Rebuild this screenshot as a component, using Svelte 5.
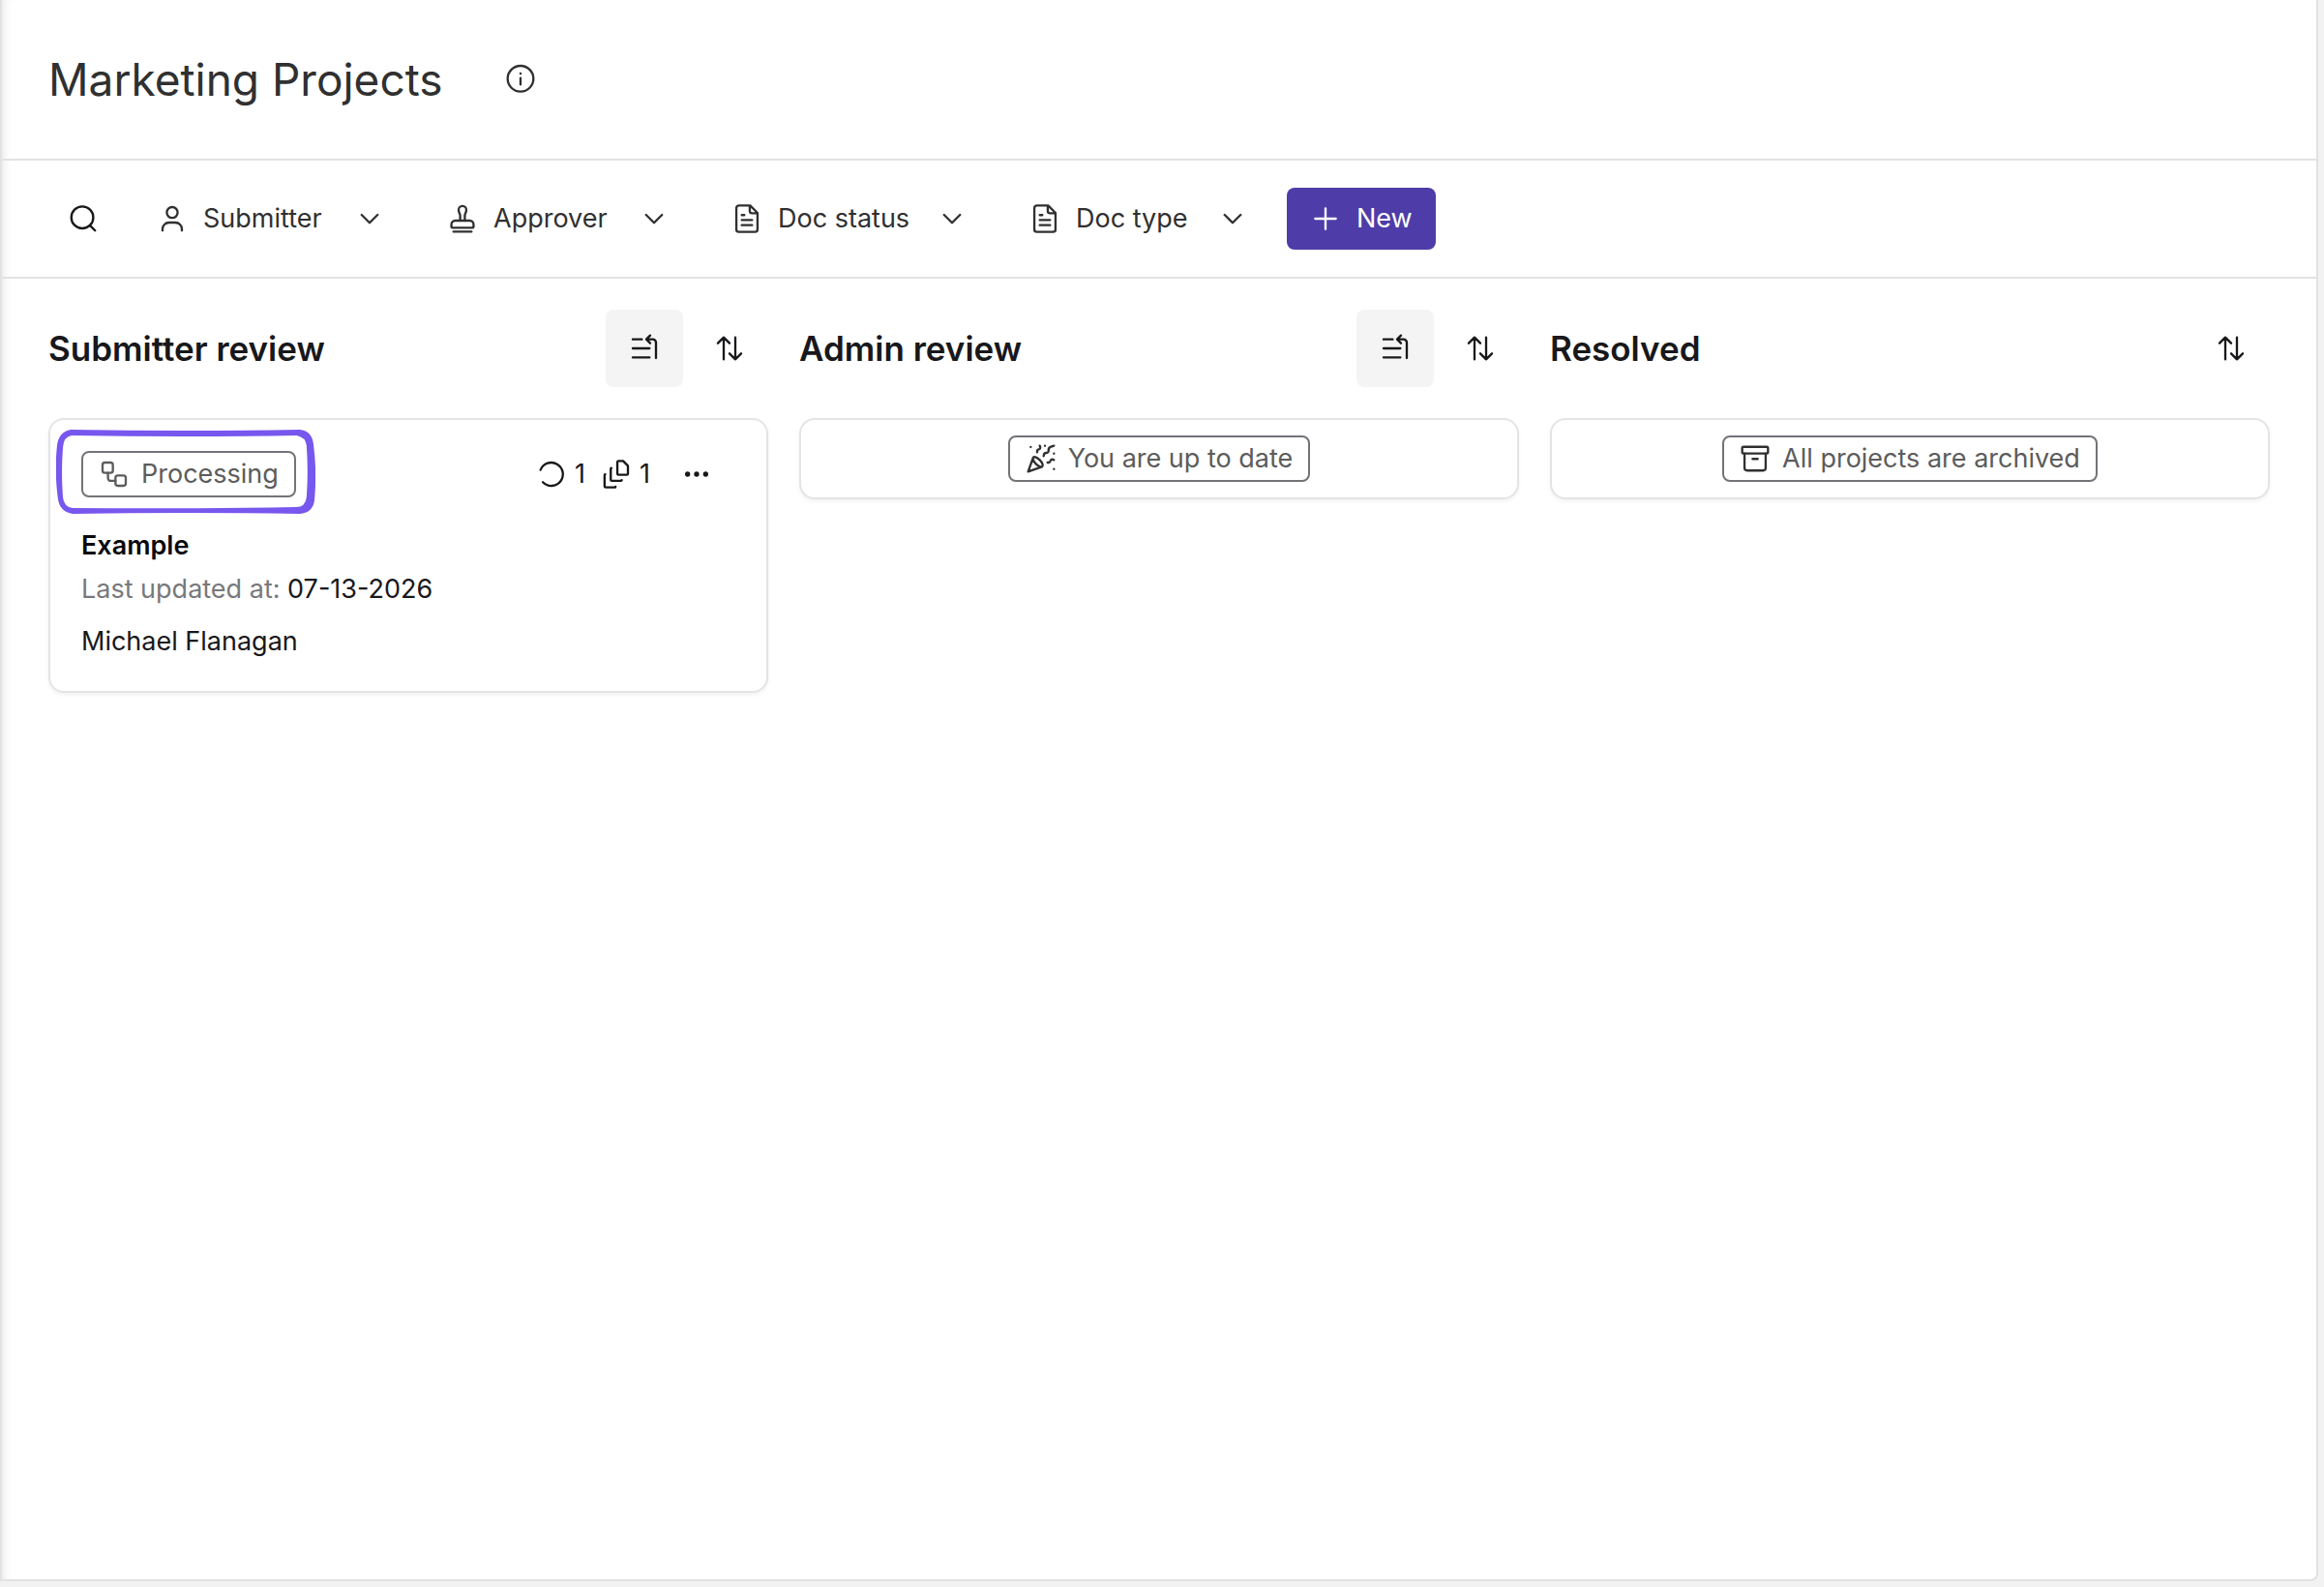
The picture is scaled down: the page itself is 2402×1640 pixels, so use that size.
<script lang="ts">
    type Filter = { label: string; icon: string; width: string };

    const filters: Filter[] = [
        { label: "Submitter", icon: "user", width: "submitter" },
        { label: "Approver", icon: "stamp", width: "approver" },
        { label: "Doc status", icon: "doc", width: "status" },
        { label: "Doc type", icon: "doc", width: "type" },
    ];
</script>

{#snippet icon(name: string)}
    <svg
        class="icon"
        width="32"
        height="32"
        viewBox="0 0 24 24"
        fill="none"
        stroke="currentColor"
        stroke-width="1.75"
        stroke-linecap="round"
        stroke-linejoin="round"
        aria-hidden="true"
    >
        {#if name === "info"}
            <circle cx="12" cy="11.5" r="10" />
            <path d="M12 16v-5M12 7.5v.1" />
        {:else if name === "search"}
            <circle cx="11.300" cy="11" r="8.500" />
            <path d="m17.500 17.500 3.700 3.700" />
        {:else if name === "user"}
            <circle cx="12" cy="7.200" r="4.200" />
            <path d="M4.500 21.200v-1.200a5 5 0 0 1 5-5h5a5 5 0 0 1 5 5v1.200" />
        {:else if name === "stamp"}
            <path d="M5 22h14M3.400 18v-1.500a3 3 0 0 1 3-3h11.200a3 3 0 0 1 3 3V18a1 1 0 0 1-1 1H4.400a1 1 0 0 1-1-1z" />
            <path d="M10.200 13.500v-4c0-1.300-1.200-2.300-1.200-4.300a3 3 0 0 1 6 0c0 2-1.200 3-1.200 4.300v4" />
        {:else if name === "doc"}
            <path d="M14.500 1.800H5.800a2 2 0 0 0-2 2v16.400a2 2 0 0 0 2 2h12.400a2 2 0 0 0 2-2V7.500zM14.200 2.200V6a1.800 1.800 0 0 0 1.800 1.800h3.800M8 9.200h2M8 13h8M8 17h8" />
        {:else if name === "chevron"}
            <path d="m5.800 9 6.200 6.200L18.200 9" />
        {:else if name === "plus"}
            <path d="M4 12h16M12 4v16" />
        {:else if name === "pending"}
            <path d="M3 5h7M3 12h13M3 19h13M14 5h4.500a2.500 2.500 0 0 1 2.500 2.500v12M16.500 2l-3 3 3 3" />
        {:else if name === "sort"}
            <path d="M7.500 20.500v-17M3 8l4.500-4.500L12 8M16.500 3.500v17M12 16l4.500 4.500L21 16" />
        {:else if name === "process"}
            <rect x="3" y="3" width="8" height="8" rx="1.800" />
            <rect x="13" y="13" width="8" height="8" rx="1.800" />
            <path d="M7.200 11v4a2.200 2.200 0 0 0 2.200 2.200H13" />
        {:else if name === "loop"}
            <path d="M3.500 8.700a9 9 0 1 1 1.800 9.500" />
        {:else if name === "versions"}
            <path d="M13.800 1.800h3.500L21 5.500v6a1 1 0 0 1-1 1h-6.200a1 1 0 0 1-1-1V2.800a1 1 0 0 1 1-1z" />
            <path d="M8.200 7.200a.5.500 0 0 0-.5.500v8.500a1 1 0 0 0 1 1h7a.5.500 0 0 0 .5-.5" />
            <path d="M3.400 12.200a.5.500 0 0 0-.5.500v8.500a1 1 0 0 0 1 1h7a.5.500 0 0 0 .5-.5" />
        {:else if name === "dots"}
            <g fill="currentColor" stroke="none">
                <circle cx="5" cy="12" r="2" />
                <circle cx="12" cy="12" r="2" />
                <circle cx="19" cy="12" r="2" />
            </g>
        {:else if name === "party"}
            <path d="M5.800 11.300 2 22l10.700-3.790M4 3h.01M22 8h.01M15 2h.01M22 20h.01M22 2l-2.240.750a2.900 2.900 0 0 0-1.960 3.120c.1.860-.57 1.630-1.450 1.630h-.38c-.86 0-1.600.600-1.760 1.440L14 10M22 13l-.82-.33c-.86-.34-1.820.200-1.980 1.110-.11.700-.72 1.220-1.430 1.220H17M11 2l.33.820c.34.860-.2 1.820-1.110 1.980C9.520 4.900 9 5.520 9 6.230V7M11 13c1.930 1.930 2.830 4.170 2 5-.83.830-3.070-.07-5-2-1.930-1.930-2.830-4.170-2-5 .83-.83 3.070.070 5 2" />
        {:else if name === "archive"}
            <rect x="2" y="2.800" width="20" height="5.200" rx="1" />
            <path d="M3.800 8v11.200a2 2 0 0 0 2 2h12.400a2 2 0 0 0 2-2V8M10 12.200h4" />
        {/if}
    </svg>
{/snippet}

{#snippet columnHead(title: string, pending: boolean)}
    <div class="column-head">
        <h2>{title}</h2>
        {#if pending}
            <button class="tool active" aria-label="Pending first">{@render icon("pending")}</button>
        {/if}
        <button class="tool" aria-label="Sort">{@render icon("sort")}</button>
    </div>
{/snippet}

<main>
    <header>
        <h1>Marketing Projects</h1>
        <button aria-label="About this board">{@render icon("info")}</button>
    </header>

    <nav>
        <button class="search" aria-label="Search">{@render icon("search")}</button>
        {#each filters as filter}
            <button class="filter {filter.width}">
                {@render icon(filter.icon)}
                <span>{filter.label}</span>
                {@render icon("chevron")}
            </button>
        {/each}
        <button class="new">{@render icon("plus")}<span>New</span></button>
    </nav>

    <div class="board">
        <section>
            {@render columnHead("Submitter review", true)}
            <article class="card project">
                <div class="card-top">
                    <div class="badge processing">
                        {@render icon("process")}<span>Processing</span>
                        <svg class="marker" viewBox="0 0 266 88" preserveAspectRatio="none" aria-hidden="true">
                            <path
                                fill="#7757ee"
                                fill-rule="evenodd"
                                d="M15 0Q130 2 250 0 262 1 264 14 268 44 265 74 263 86 250 87 130 85 17 87 4 85 2 72-2 44 1 16 3 2 15 0zM16 6Q8 7 7 18 5 44 7 70 8 80 17 81 130 82 246 80 256 80 257 70 259 44 257 16 256 8 247 6 130 8 16 6z"
                            />
                        </svg>
                    </div>
                    <div class="counts">
                        <span>{@render icon("loop")}1</span>
                        <span>{@render icon("versions")}1</span>
                    </div>
                    <button class="more" aria-label="More actions">{@render icon("dots")}</button>
                </div>
                <h3>Example</h3>
                <p class="updated">Last updated at: <time datetime="2026-07-13">07-13-2026</time></p>
                <p class="owner">Michael Flanagan</p>
            </article>
        </section>

        <section>
            {@render columnHead("Admin review", true)}
            <div class="card empty">
                <div class="badge">{@render icon("party")}<span>You are up to date</span></div>
            </div>
        </section>

        <section>
            {@render columnHead("Resolved", false)}
            <div class="card empty">
                <div class="badge">{@render icon("archive")}<span>All projects are archived</span></div>
            </div>
        </section>
    </div>
</main>

<style>
    :global(body) {
        background: #f2f2f2;
    }

    main {
        box-sizing: border-box;
        display: flex;
        flex-direction: column;
        min-height: calc(100vh - 6px);
        margin-right: 6px;
        border: 2px solid #e2e2e3;
        border-top: none;
        border-bottom-right-radius: 8px;
        background: #fff;
        box-shadow: inset 8px 0 8px -6px #e8e8ea;
        color: #18181b;
        font-family: Inter, "Open Sans", sans-serif;
        font-size: 27px;
        line-height: 36px;
    }

    h1,
    h2,
    h3,
    p {
        margin: 0;
    }

    button {
        display: flex;
        align-items: center;
        padding: 0;
        border: none;
        background: none;
        color: inherit;
        font: inherit;
        cursor: pointer;
    }

    .icon {
        flex: none;
        display: block;
    }

    header {
        display: flex;
        align-items: center;
        gap: 64px;
        height: 164px;
        padding: 0 48px;
        border-bottom: 2px solid #e2e2e3;
        color: #303030;
    }

    h1 {
        font-size: 46px;
        font-weight: 400;
        line-height: 64px;
    }

    nav {
        display: flex;
        align-items: center;
        height: 120px;
        padding: 0 68px;
        border-bottom: 2px solid #e2e2e3;
    }

    .search {
        margin-right: 60px;
    }

    .filter {
        gap: 16px;
        margin-right: 64px;
        color: #303030;
    }

    .filter span {
        flex: 1;
        text-align: left;
    }

    .submitter {
        width: 236px;
    }

    .approver {
        width: 230px;
    }

    .status {
        width: 244px;
    }

    .type {
        width: 226px;
        margin-right: 40px;
    }

    .new {
        gap: 16px;
        height: 64px;
        padding: 0 24px;
        border-radius: 8px;
        background: #4e3da8;
        color: #fff;
    }

    .board {
        display: grid;
        grid-template-columns: repeat(3, 1fr);
        gap: 32px;
        padding: 32px 48px;
    }

    .column-head {
        display: flex;
        align-items: center;
        gap: 8px;
        height: 80px;
    }

    h2 {
        flex: 1;
        font-size: 35px;
        font-weight: 600;
        line-height: 48px;
    }

    .tool {
        justify-content: center;
        width: 80px;
        height: 80px;
        border-radius: 8px;
    }

    .tool.active {
        background: #f4f4f4;
    }

    .card {
        margin-top: 32px;
        border: 2px solid #e4e4e7;
        border-radius: 16px;
        box-shadow: 0 2px 4px rgb(0 0 0 / 6%);
    }

    .project {
        padding: 32px;
    }

    .empty {
        display: flex;
        justify-content: center;
        padding: 16px;
    }

    .card-top {
        display: flex;
        align-items: center;
    }

    .badge {
        position: relative;
        display: flex;
        align-items: center;
        gap: 12px;
        height: 44px;
        padding: 0 16px;
        border: 2px solid #737378;
        border-radius: 8px;
        color: #303030;
    }

    .badge span {
        color: #5c5c5c;
    }

    .processing {
        color: #5c5c5c;
    }

    /* hand-drawn highlight around the status badge */
    .marker {
        position: absolute;
        top: -24px;
        left: -28px;
        width: calc(100% + 50px);
        height: 88px;
    }

    .counts {
        display: flex;
        gap: 16px;
        margin-left: auto;
    }

    .counts span {
        display: flex;
        align-items: center;
        gap: 8px;
    }

    .more {
        margin: 0 24px 0 32px;
    }

    h3 {
        margin-top: 32px;
        font-size: 27px;
        font-weight: 600;
        line-height: 36px;
        color: #09090b;
    }

    .project p {
        line-height: 38px;
    }

    .updated {
        margin-top: 8px;
        color: #78787c;
    }

    time {
        color: #18181b;
    }

    .owner {
        margin-top: 16px;
    }
</style>
